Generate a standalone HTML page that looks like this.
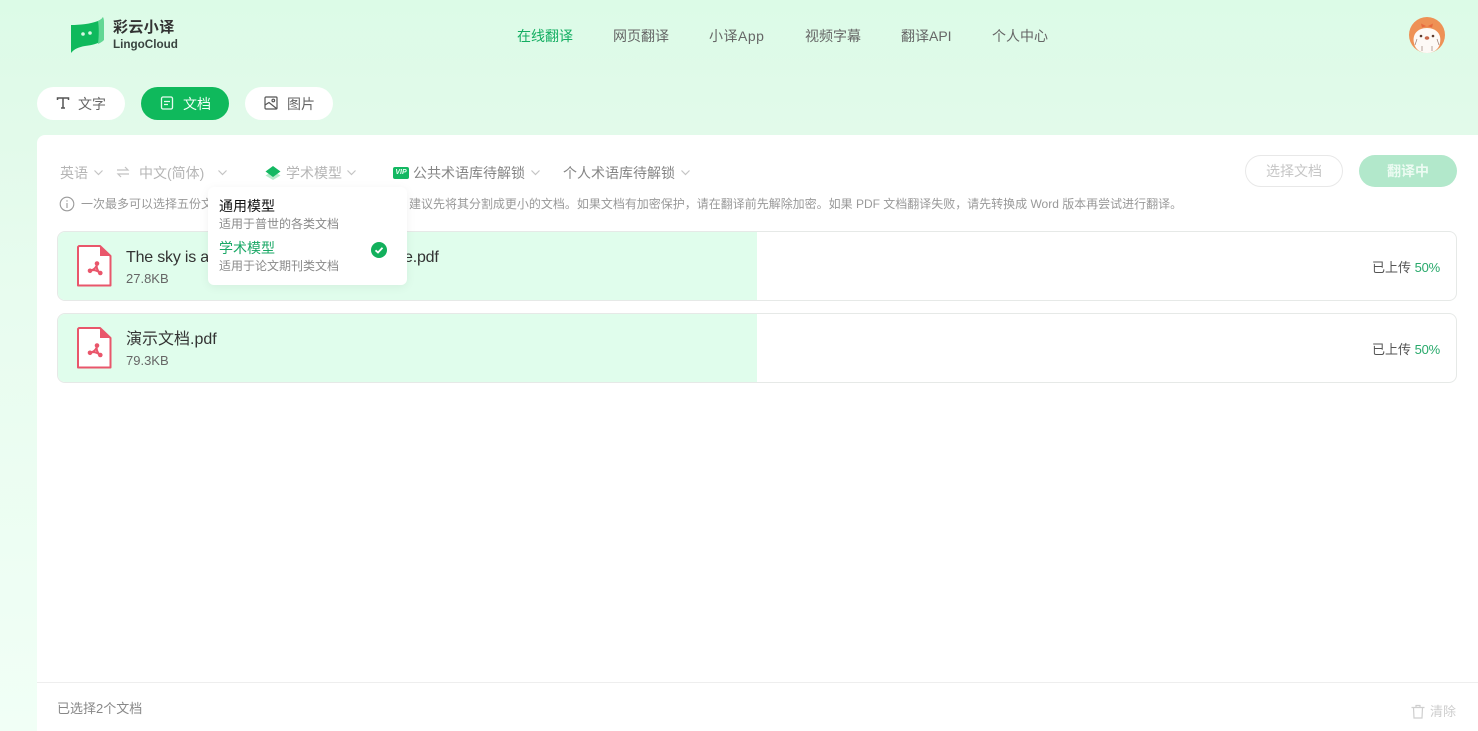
<!DOCTYPE html>
<html lang="zh"><head><meta charset="utf-8"><title>彩云小译</title>
<style>
*{box-sizing:border-box;margin:0;padding:0}
html,body{width:1478px;height:731px;overflow:hidden}
body{position:relative;font-family:"Liberation Sans","Noto Sans CJK SC",sans-serif;background:linear-gradient(180deg,#dcfbe7 0,#e2faea 135px,#e8fcef 300px,#f1fff6 731px)}
.a{position:absolute;white-space:nowrap}
.nav{top:27px;font-size:14px;line-height:18px;color:#666}
.tab{top:87px;height:33px;border-radius:17px;background:#fff;width:88px}
.tab span{position:absolute;left:41px;top:8px;font-size:14px;line-height:18px;color:#666}
.tab svg{position:absolute;left:18px;top:8px}
.panel{left:37px;top:135px;width:1441px;height:596px;background:#fff;border-top-left-radius:8px}
.tb{top:164px;font-size:14px;line-height:18px;color:#b5b5b5}
.ch{position:absolute;top:169px}
.file{left:57px;width:1400px;height:70px;border:1px solid #e6e9e7;border-radius:8px;overflow:hidden;background:#fff}
.bar{position:absolute;left:0;top:0;width:699px;height:68px;background:#e0fdec}
.name{left:126px;font-size:16px;line-height:22px;color:#333}
.size{left:126px;font-size:13px;line-height:16px;color:#666}
.st{left:1372px;font-size:13px;line-height:18px;color:#555}
.st b{font-weight:400;color:#28a96b}
</style></head><body>

<!-- logo -->
<svg class="a" style="left:68px;top:15px" width="38" height="40" viewBox="0 0 38 40">
<path d="M3 10C12 10 22 9 30 6C32 5 34 4 35 2V25C30 29 24 30 17 31C11 32 6 34 3 38Z" fill="#0fb95c"/>
<path d="M30 6C32 5 34 4 35 2C36 4 36 6 36 8V25C34 27 32 28 30 29C31 20 31 12 30 6Z" fill="#62d794"/>
<circle cx="15" cy="19" r="1.800" fill="#d7f7e3"/><circle cx="22" cy="18" r="1.800" fill="#d7f7e3"/></svg>
<div class="a" style="left:113px;top:18px;font-size:15px;line-height:19px;font-weight:700;color:#333;letter-spacing:.4px">彩云小译</div>
<div class="a" style="left:113px;top:37px;font-size:11.700px;line-height:16px;font-weight:700;color:#3a4440">LingoCloud</div>

<!-- nav -->
<div class="a nav" style="left:517px;color:#14ae62">在线翻译</div>
<div class="a nav" style="left:613px">网页翻译</div>
<div class="a nav" style="left:709px;letter-spacing:.5px">小译App</div>
<div class="a nav" style="left:805px">视频字幕</div>
<div class="a nav" style="left:901px">翻译API</div>
<div class="a nav" style="left:992px">个人中心</div>

<!-- avatar -->
<svg class="a" style="left:1408px;top:16px" width="38" height="38" viewBox="0 0 38 38">
<circle cx="19" cy="19" r="18" fill="#ee9155"/>
<path d="M6 27C4 18 10 12 19 12S34 18 32 27C31 33 26 37 19 37S7 33 6 27Z" fill="#fdf9f6"/>
<path d="M13 7.500l6 3 6-3-1 4-5-1.500-5 1.500Z" fill="#e76a3d"/>
<circle cx="13" cy="20" r="1.300" fill="#5b3a2d"/><circle cx="25" cy="20" r="1.300" fill="#5b3a2d"/>
<ellipse cx="19" cy="22" rx="2.300" ry="1.800" fill="#c9694b"/>
<path d="M9 23l-2 6M29 23l2 6M14 30v5M24 30v5" stroke="#9a7f74" stroke-width=".7" fill="none"/></svg>

<!-- tabs -->
<div class="a tab" style="left:37px"><svg style="left:19px" width="14" height="16" viewBox="0 0 14 16" fill="none" stroke="#555" stroke-width="1.500"><path d="M1.500 5V3H12.500V5M7 3V13M5 13H9"/></svg><span>文字</span></div>
<div class="a tab" style="left:141px;background:#0fb95c"><svg width="16" height="16" viewBox="0 0 16 16" fill="none" stroke="#e6fbee" stroke-width="1.300"><rect x="2.500" y="2" width="11" height="12" rx="1.500"/><path d="M5 6.500H11M5 9.500H9"/></svg><span style="left:42px;color:#f2fff7">文档</span></div>
<div class="a tab" style="left:245px"><svg width="16" height="16" viewBox="0 0 16 16" fill="none" stroke="#555" stroke-width="1.200"><rect x="2" y="2" width="12" height="12" rx="1"/><circle cx="10.300" cy="5.500" r="1.300"/><path d="M2 10L6 7.500L13.500 13.500"/></svg><span style="left:42px">图片</span></div>

<!-- panel -->
<div class="a panel"></div>

<!-- toolbar -->
<div class="a tb" style="left:60px">英语</div>
<svg class="ch" style="left:93px" width="11" height="8" viewBox="0 0 11 8" fill="none" stroke="#c4c4c4" stroke-width="1.200"><path d="M1.500 1.500L5.500 5.500L9.500 1.500"/></svg>
<svg class="a" style="left:116px;top:165px" width="14" height="14" viewBox="0 0 14 14" fill="none" stroke="#c2c2c2" stroke-width="1.200"><path d="M1 5H12L9 2M13 9H2L5 12"/></svg>
<div class="a tb" style="left:139px">中文(简体)</div>
<svg class="ch" style="left:217px" width="11" height="8" viewBox="0 0 11 8" fill="none" stroke="#c4c4c4" stroke-width="1.200"><path d="M1.500 1.500L5.500 5.500L9.500 1.500"/></svg>
<svg class="a" style="left:265px;top:165px" width="16" height="16" viewBox="0 0 16 16"><path d="M8 6L15.500 10.500L8 15L.5 10.500Z" fill="#b4ecca"/><path d="M8 1L15.500 6.500L8 12L.5 6.500Z" fill="#14b862"/></svg>
<div class="a tb" style="left:286px">学术模型</div>
<svg class="ch" style="left:346px" width="11" height="8" viewBox="0 0 11 8" fill="none" stroke="#c4c4c4" stroke-width="1.200"><path d="M1.500 1.500L5.500 5.500L9.500 1.500"/></svg>
<div class="a" style="left:393px;top:167px;width:16px;height:12px;border-radius:2px;background:#14b862;color:#e8fff2;font-size:7px;line-height:12px;font-weight:700;text-align:center;font-style:italic">VIP</div>
<div class="a tb" style="left:413px;color:#858585">公共术语库待解锁</div>
<svg class="ch" style="left:530px" width="11" height="8" viewBox="0 0 11 8" fill="none" stroke="#c4c4c4" stroke-width="1.200"><path d="M1.500 1.500L5.500 5.500L9.500 1.500"/></svg>
<div class="a tb" style="left:563px;color:#858585">个人术语库待解锁</div>
<svg class="ch" style="left:680px" width="11" height="8" viewBox="0 0 11 8" fill="none" stroke="#c4c4c4" stroke-width="1.200"><path d="M1.500 1.500L5.500 5.500L9.500 1.500"/></svg>

<div class="a" style="left:1245px;top:155px;width:98px;height:32px;border:1px solid #e8e8e8;border-radius:16px;text-align:center;font-size:14px;line-height:31px;color:#c6c6c6">选择文档</div>
<div class="a" style="left:1359px;top:155px;width:98px;height:32px;border-radius:16px;background:#b2e8cb;text-align:center;font-size:14px;line-height:33px;color:#ecfbf2;font-weight:700">翻译中</div>

<!-- notice -->
<svg class="a" style="left:59px;top:196px" width="16" height="16" viewBox="0 0 16 16" fill="none" stroke="#9a9a9a" stroke-width="1.100"><circle cx="8" cy="8" r="6.800"/><path d="M8 7V12M8 4.200V5.600"/></svg>
<div class="a" style="left:81px;top:196px;font-size:12px;line-height:17px;color:#999">一次最多可以选择五份文</div>
<div class="a" style="left:409px;top:196px;font-size:12px;line-height:17px;color:#999;letter-spacing:-.01px">建议先将其分割成更小的文档。如果文档有加密保护，请在翻译前先解除加密。如果 PDF 文档翻译失败，请先转换成 Word 版本再尝试进行翻译。</div>

<!-- file rows -->
<div class="a file" style="top:231px"><div class="bar"></div></div>
<div class="a file" style="top:313px"><div class="bar"></div></div>

<svg class="a" style="left:77px;top:245px" width="35" height="42" viewBox="0 0 35 42"><path d="M2 1H23L33.500 11V40.500H1V2Z" fill="#fff" stroke="#e9566b" stroke-width="2" stroke-linejoin="round"/><path d="M23 1V11H33.500Z" fill="#e9566b"/><g fill="none" stroke="#e9566b" stroke-width="2" stroke-linecap="round"><path d="M20 18.500C20 21 18 24.500 13 25.800M20 18.500C19 21.500 20 25.500 23 28M13 25.800C16 24.500 20 25 23 28"/></g><circle cx="20" cy="18.500" r="2.300" fill="#e9566b"/><circle cx="13" cy="25.800" r="2.300" fill="#e9566b"/><circle cx="23.300" cy="28" r="2.300" fill="#e9566b"/></svg>
<svg class="a" style="left:77px;top:327px" width="35" height="42" viewBox="0 0 35 42"><path d="M2 1H23L33.500 11V40.500H1V2Z" fill="#fff" stroke="#e9566b" stroke-width="2" stroke-linejoin="round"/><path d="M23 1V11H33.500Z" fill="#e9566b"/><g fill="none" stroke="#e9566b" stroke-width="2" stroke-linecap="round"><path d="M20 18.500C20 21 18 24.500 13 25.800M20 18.500C19 21.500 20 25.500 23 28M13 25.800C16 24.500 20 25 23 28"/></g><circle cx="20" cy="18.500" r="2.300" fill="#e9566b"/><circle cx="13" cy="25.800" r="2.300" fill="#e9566b"/><circle cx="23.300" cy="28" r="2.300" fill="#e9566b"/></svg>

<div class="a name" style="top:247px;letter-spacing:-.2px">The sky is a</div>
<div class="a name" style="top:247px;left:404px;letter-spacing:-.2px">e.pdf</div>
<div class="a size" style="top:271px">27.8KB</div>
<div class="a st" style="top:259px">已上传 <b style="letter-spacing:-.2px">50%</b></div>

<div class="a name" style="top:329px">演示文档.pdf</div>
<div class="a size" style="top:353px">79.3KB</div>
<div class="a st" style="top:341px">已上传 <b style="letter-spacing:-.2px">50%</b></div>

<!-- dropdown -->
<div class="a" style="left:208px;top:187px;width:199px;height:98px;background:#fff;border-radius:6px;box-shadow:0 2px 10px rgba(0,0,0,.06)"></div>
<div class="a" style="left:219px;top:197px;font-size:14px;line-height:18px;color:#111">通用模型</div>
<div class="a" style="left:219px;top:216px;font-size:12px;line-height:17px;color:#8a8a8a">适用于普世的各类文档</div>
<div class="a" style="left:219px;top:239px;font-size:14px;line-height:18px;color:#1aa866">学术模型</div>
<div class="a" style="left:219px;top:258px;font-size:12px;line-height:17px;color:#8a8a8a">适用于论文期刊类文档</div>
<svg class="a" style="left:371px;top:242px" width="16" height="16" viewBox="0 0 16 16"><circle cx="8" cy="8" r="8" fill="#12b05c"/><path d="M4.500 8.300L7 10.500L11.500 5.800" fill="none" stroke="#fff" stroke-width="1.800"/></svg>

<!-- footer -->
<div class="a" style="left:37px;top:682px;width:1441px;height:1px;background:#eeeeee"></div>
<div class="a" style="left:57px;top:700px;font-size:13px;line-height:18px;color:#888">已选择2个文档</div>
<svg class="a" style="left:1410px;top:704px" width="16" height="16" viewBox="0 0 16 16" fill="none" stroke="#cfcfcf" stroke-width="1.200"><path d="M1.500 3.500H14.500M3.500 3.500L4 14H12L12.500 3.500M6 3.500V1.500H10V3.500"/></svg>
<div class="a" style="left:1430px;top:703px;font-size:13px;line-height:18px;color:#cdcdcd">清除</div>

</body></html>
